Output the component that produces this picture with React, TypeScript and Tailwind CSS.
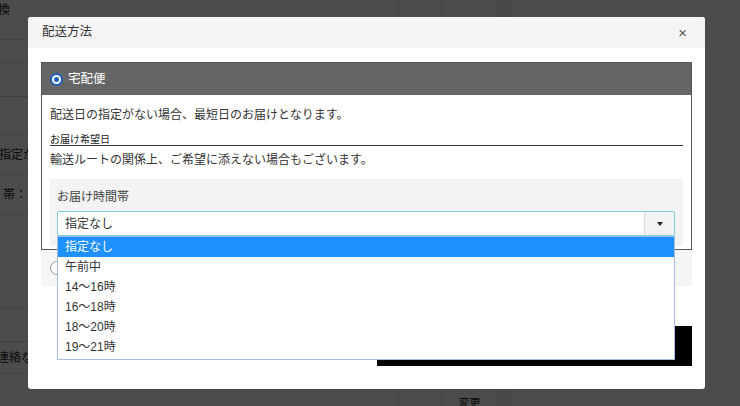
import React from 'react';

const times = ['指定なし', '午前中', '14～16時', '16～18時', '18～20時', '19～21時'];

function Radio({ checked }: { checked?: boolean }) {
  if (checked) {
    return (
      <span className="w-[13px] h-[13px] rounded-full bg-[#1f5fbf] flex items-center justify-center shrink-0">
        <span className="w-[9px] h-[9px] rounded-full bg-white flex items-center justify-center">
          <span className="w-[5px] h-[5px] rounded-full bg-[#1f5fbf]" />
        </span>
      </span>
    );
  }
  return <span className="w-[14px] h-[14px] rounded-full border border-[#999] bg-white shrink-0" />;
}

export default function App() {
  return (
    <div className="relative w-[740px] h-[406px] overflow-hidden bg-white font-['Liberation_Sans','Noto_Sans_CJK_JP',sans-serif] text-[#333]">
      {/* page underneath */}
      <div className="flex h-full">
        <div className="w-[398px] flex flex-col text-[12px] text-[#222]">
          <div className="h-[40px] pt-[1px] border-b border-[#ddd] -ml-[2px]">換</div>
          <div className="h-[23px] border-b border-[#ddd]" />
          <div className="h-[34px] border-b border-[#ccc]" />
          <div className="h-[38px] border-b border-[#e5e5e5]" />
          <div className="h-[40px] border-b border-[#e5e5e5] flex items-center -ml-[1px] whitespace-nowrap">指定があ</div>
          <div className="h-[40px] border-b border-[#e5e5e5] flex items-center pl-[3px] whitespace-nowrap">帯：</div>
          <div className="h-[93px] border-b border-[#e5e5e5]" />
          <div className="h-[34px] border-b border-[#ccc]" />
          <div className="h-[32px] border-b border-[#e5e5e5] flex items-center -ml-[3px] whitespace-nowrap">連絡な</div>
          <div className="h-[30px]" />
        </div>
        <div className="w-[43px] border-l border-[#ddd]" />
        <div className="w-[57px] border-x border-[#ddd] flex items-end justify-center">
          <span className="text-[11px] text-[#222] leading-none translate-y-[3px]">変更</span>
        </div>
        <div className="w-[15px] bg-[#f0f0f0]" />
        <div className="flex-1" />
      </div>
      <div className="absolute inset-0 bg-black/70" />

      {/* modal */}
      <div className="absolute left-[28px] top-[17px] w-[677px] h-[372px] bg-white rounded-[3px] flex flex-col">
        <div className="h-[31px] bg-[#f5f5f5] rounded-t-[3px] flex items-center justify-between pl-[14px] pr-[18px]">
          <span className="text-[12.5px] text-[#333]">配送方法</span>
          <span className="text-[15px] leading-none text-[#555]">×</span>
        </div>
        <div className="pt-[14px] px-[13px] flex flex-col">
          <div className="border border-[#555] flex flex-col">
            <div className="h-[32px] bg-[#666] flex items-center gap-[5px] pl-[8px]">
              <Radio checked />
              <span className="text-[12.5px] text-white">宅配便</span>
            </div>
            <div className="px-[8px] pt-[11px] pb-[3px] flex flex-col">
              <div className="text-[12px] leading-[18px]">配送日の指定がない場合、最短日のお届けとなります。</div>
              <div className="mt-[10px] text-[10px] leading-[11px] border-b border-[#333] text-[#222]">お届け希望日</div>
              <div className="mt-[5px] text-[12px] leading-[18px]">輸送ルートの関係上、ご希望に添えない場合もございます。</div>
              <div className="mt-[10px] bg-[#f3f3f3] px-[7px] pt-[9px] pb-[10px] flex flex-col">
                <div className="text-[12px] leading-[18px] text-[#444]">お届け時間帯</div>
                <div className="relative mt-[5px] mr-[1px]">
                  <div className="h-[25px] border border-[#7ccfd4] bg-white flex items-center rounded-[2px]">
                    <span className="flex-1 pl-[7px] text-[12px] text-[#333]">指定なし</span>
                    <span className="w-[30px] h-full bg-[#f2f2f2] border-l border-[#ddd] flex items-center justify-center">
                      <span className="w-0 h-0 border-l-[3px] border-r-[3px] border-t-[4px] border-l-transparent border-r-transparent border-t-[#222]" />
                    </span>
                  </div>
                  <div className="absolute left-0 right-0 top-[25px] z-10 bg-white border border-[#a4bde0] pb-[2px] flex flex-col">
                    {times.map((t, i) => (
                      <div
                        key={t}
                        className={
                          i === 0
                            ? 'h-[20px] flex items-center pl-[7px] text-[12px] bg-[#1e90ff] text-white'
                            : 'h-[20px] flex items-center pl-[7px] text-[12px] text-[#333]'
                        }
                      >
                        {t}
                      </div>
                    ))}
                  </div>
                </div>
              </div>
            </div>
          </div>
          <div className="h-[36px] bg-[#f5f5f5] flex items-center pl-[9px]">
            <Radio />
          </div>
          <div className="mt-[40px] flex justify-end gap-[20px]">
            <div className="w-[142px] h-[32px] bg-white border-b-2 border-[#b5bfcc]" />
            <div className="w-[315px] h-[40px] bg-black" />
          </div>
        </div>
      </div>
    </div>
  );
}
